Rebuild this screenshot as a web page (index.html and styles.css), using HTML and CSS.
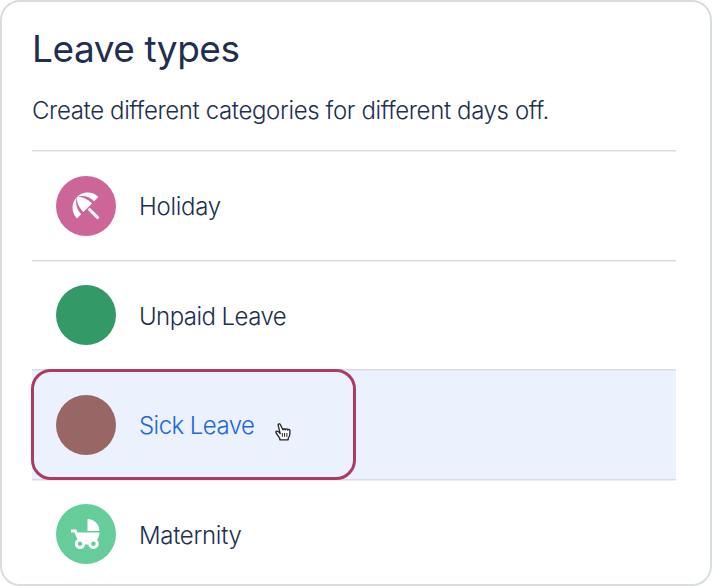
FILE: index.html
```
<!DOCTYPE html>
<html lang="en">
  <head>
    <meta charset="utf-8" />
    <title>Leave types</title>
    <link rel="stylesheet" href="styles.css">
  </head>
  <body>
    <div class="card">
      <h1>Leave types</h1>
      <p class="intro">Create different categories for different days off.</p>

      <ul class="leave-list">
        <li class="leave-item">
          <div class="leave-icon holiday">
            <svg viewBox="0 0 24 24">
              <path d="M13.127 14.56l1.43-1.43 6.44 6.443L19.57 21zm4.293-5.73l2.86-2.86c-3.95-3.95-10.35-3.96-14.3-.02 3.93-1.3 8.31-.25 11.44 2.88zM5.95 5.98c-3.94 3.95-3.93 10.35.02 14.3l2.86-2.86C5.7 14.29 4.65 9.91 5.95 5.98zm.02-.02l-.01.01c-.38 3.01 1.17 6.88 4.3 10.02l5.73-5.73c-3.13-3.13-7.01-4.68-10.02-4.3z" />
            </svg>
          </div>
          <span class="leave-name">Holiday</span>
        </li>
        <li class="leave-item">
          <div class="leave-icon unpaid"></div>
          <span class="leave-name tight">Unpaid Leave</span>
        </li>
        <li class="leave-item active">
          <div class="leave-icon sick"></div>
          <span class="leave-name tight">Sick Leave</span>
          <div class="highlight"></div>
          <svg class="cursor" viewBox="0 0 16 18">
            <path d="M5.2 10.6C4.4 9.6 3.2 8.3 2 8.2.8 8.1.6 9.3 1.2 10c1.2 1.6 2.3 3.6 3.6 5.2v1.6h8.4v-1.6c1.2-1.5 1.7-3.2 1.7-5V7.5c0-1.5-2-1.5-2.2-.3 0-1.5-2.2-1.8-2.4-.4-.2-1.4-2.2-1.4-2.4 0L5.4 1.8C4.9.3 2.8.8 3.2 2.4z" />
            <path class="fingers" d="M7.3 10v3.8M9.6 10v3.8M11.9 10v3.8" />
          </svg>
        </li>
        <li class="leave-item">
          <div class="leave-icon maternity">
            <svg viewBox="0 0 24 24">
              <path d="M13 2v8h8c0-4.42-3.58-8-8-8zm6.32 13.89C20.37 14.54 21 12.84 21 11H6.44l-.95-2H2v2h2.22s1.89 4.07 2.12 4.42c-1.1.59-1.84 1.75-1.84 3.08C4.5 20.43 6.07 22 8 22c1.76 0 3.22-1.3 3.46-3h2.08c.24 1.7 1.7 3 3.46 3 1.93 0 3.5-1.57 3.5-3.5 0-1.04-.46-1.97-1.18-2.61zM8 20c-.83 0-1.5-.67-1.5-1.5S7.17 17 8 17s1.5.67 1.5 1.5S8.83 20 8 20zm9 0c-.83 0-1.5-.67-1.5-1.5S16.17 17 17 17s1.5.67 1.5 1.5S17.83 20 17 20z" />
            </svg>
          </div>
          <span class="leave-name">Maternity</span>
        </li>
      </ul>
    </div>
  </body>
</html>
```
FILE: styles.css
```
* {
  box-sizing: border-box;
}

body {
  margin: 0;
  background-color: #fff;
  color: #212e4f;
  font-family: Inter, "Open Sans", sans-serif;
}

.card {
  height: 586px;
  padding: 25px 34px 0 30px;
  border: 2px solid #d9dde2;
  border-radius: 20px;
  overflow: hidden;
}

h1 {
  margin: 0;
  font-size: 37px;
  font-weight: 400;
  line-height: 44px;
  letter-spacing: -0.45px;
}

.intro {
  margin: 24px 0 23px;
  font-size: 24px;
  font-weight: 300;
  line-height: 32px;
  letter-spacing: -0.37px;
  white-space: nowrap;
}

.leave-list {
  margin: 0;
  padding: 0;
  list-style: none;
}

.leave-item {
  position: relative;
  display: flex;
  align-items: center;
  gap: 23px;
  height: 109.5px;
  padding: 1px 0 0 24px;
  border-top: 1px solid #d9dae2;
  box-shadow: inset 0 1px #eeeef2;
  font-size: 24px;
  font-weight: 300;
}

.leave-item.active {
  z-index: 1;
  background-color: #ebf2fe;
  box-shadow: inset 0 1px #e2e7f2;
  color: #2467d6;
}

.leave-icon {
  display: flex;
  align-items: center;
  justify-content: center;
  width: 60px;
  height: 60px;
  border-radius: 50%;
}

.leave-icon svg {
  width: 36px;
  height: 36px;
  fill: #fff;
}

.leave-name {
  padding-top: 2px;
  letter-spacing: -0.3px;
}

.leave-name.tight {
  letter-spacing: -0.55px;
}

.holiday {
  background-color: #cc6699;
}

.unpaid {
  background-color: #339966;
}

.sick {
  background-color: #996666;
}

.maternity {
  background-color: #66cc99;
}

.highlight {
  position: absolute;
  top: -1px;
  left: -1px;
  width: 325px;
  height: 111px;
  border: 3px solid #ae3a64;
  border-radius: 20px;
}

.cursor {
  position: absolute;
  top: 53px;
  left: 243px;
  width: 16px;
  height: 18px;
  fill: #fff;
  stroke: #222;
  stroke-width: 1.3;
  stroke-linejoin: round;
}

.cursor .fingers {
  fill: none;
  stroke-width: 1;
}
```
